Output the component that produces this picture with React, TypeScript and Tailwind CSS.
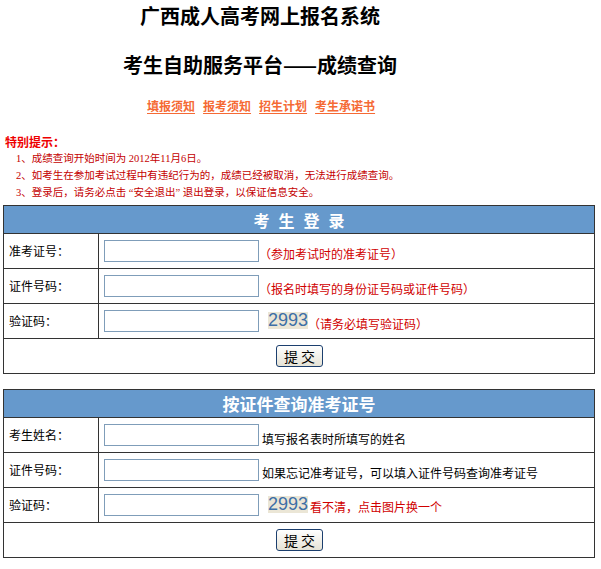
import React, { useState } from 'react';

const cn = "font-['Noto_Sans_CJK_SC',sans-serif]";

const Captcha: React.FC = () => (
  <span className="inline-flex h-[17px] w-[40px] items-center justify-center bg-[#ebe6d6] font-['Liberation_Sans',sans-serif] text-[18px] leading-[17px] text-[#3d6fa6]">
    2993
  </span>
);

const SubmitButton: React.FC = () => (
  <button className={`h-[22px] w-[47px] rounded-[3px] border border-[#1c3f6e] bg-gradient-to-b from-white to-[#e6e3d6] text-[14px] leading-[20px] text-black ${cn}`}>
    提 交
  </button>
);

interface RowProps {
  label: string;
  children?: React.ReactNode;
}

const FormRow: React.FC<RowProps> = ({ label, children }) => (
  <div className="flex h-[35px] border-t border-[#333]">
    <div className="flex w-[95px] items-center border-r border-[#333] pl-[5px] text-[12px] text-black">{label}</div>
    <div className="flex flex-1 items-center pl-[5px]">{children}</div>
  </div>
);

const Field: React.FC<{ value: string; onChange: (v: string) => void }> = ({ value, onChange }) => (
  <input
    value={value}
    onChange={e => onChange(e.target.value)}
    className="h-[22px] w-[155px] border border-[#7f9db9] bg-white px-1 text-[12px] outline-none"
  />
);

export default function App() {
  const [examNo, setExamNo] = useState('');
  const [idNo, setIdNo] = useState('');
  const [code1, setCode1] = useState('');
  const [name, setName] = useState('');
  const [idNo2, setIdNo2] = useState('');
  const [code2, setCode2] = useState('');

  return (
    <div className={`min-h-[569px] w-[601px] bg-white pt-[5px] pb-[10px] ${cn}`}>
      <div className="w-[520px] text-center">
        <h1 className="text-[20px] font-bold leading-[22px] text-black">广西成人高考网上报名系统</h1>
        <h2 className="mt-[27px] text-[20px] font-bold leading-[22px] text-black">考生自助服务平台——成绩查询</h2>
      </div>
      <div className="mt-[23px] ml-[147px] flex gap-[8px] text-[12px] font-bold leading-[14px] text-[#f56a35]">
        <a href="#" className="underline underline-offset-2">填报须知</a>
        <a href="#" className="underline underline-offset-2">报考须知</a>
        <a href="#" className="underline underline-offset-2">招生计划</a>
        <a href="#" className="underline underline-offset-2">考生承诺书</a>
      </div>

      <div className="mt-[21px] pl-[5px]">
        <div className="text-[12px] font-bold leading-[16px] text-[#ee0000]">特别提示：</div>
        <ul className="pl-[11px] font-['Liberation_Serif','Noto_Sans_CJK_SC',serif] text-[10.5px] leading-[17px] text-[#c40000]">
          <li>1、成绩查询开始时间为 2012年11月6日。</li>
          <li>2、如考生在参加考试过程中有违纪行为的，成绩已经被取消，无法进行成绩查询。</li>
          <li>3、登录后，请务必点击 “安全退出” 退出登录，以保证信息安全。</li>
        </ul>
      </div>

      <div className="mt-[4px] ml-[3px] w-[592px] border border-[#333]">
        <div className="flex h-[27px] items-center justify-center bg-[#6699cc] pl-[9px] text-[16px] font-bold tracking-[9px] text-white">
          考生登录
        </div>
        <FormRow label="准考证号：">
          <Field value={examNo} onChange={setExamNo} />
          <span className="mt-[6px] text-[12px] text-[#d00000]">（参加考试时的准考证号）</span>
        </FormRow>
        <FormRow label="证件号码：">
          <Field value={idNo} onChange={setIdNo} />
          <span className="mt-[6px] text-[12px] text-[#d00000]">（报名时填写的身份证号码或证件号码）</span>
        </FormRow>
        <FormRow label="验证码：">
          <Field value={code1} onChange={setCode1} />
          <span className="ml-[9px] mb-[5px]"><Captcha /></span>
          <span className="mt-[6px] text-[12px] text-[#d00000]">（请务必填写验证码）</span>
        </FormRow>
        <div className="flex h-[35px] items-center justify-center border-t border-[#333] pl-[1px]">
          <SubmitButton />
        </div>
      </div>

      <div className="mt-[15px] ml-[3px] w-[592px] border border-[#333]">
        <div className="flex h-[27px] items-center justify-center bg-[#6699cc] text-[17px] font-bold text-white">
          按证件查询准考证号
        </div>
        <FormRow label="考生姓名：">
          <Field value={name} onChange={setName} />
          <span className="ml-[3px] mt-[8px] text-[12px] text-black">填写报名表时所填写的姓名</span>
        </FormRow>
        <FormRow label="证件号码：">
          <Field value={idNo2} onChange={setIdNo2} />
          <span className="ml-[3px] mt-[6px] text-[12px] text-black">如果忘记准考证号，可以填入证件号码查询准考证号</span>
        </FormRow>
        <FormRow label="验证码：">
          <Field value={code2} onChange={setCode2} />
          <span className="ml-[9px] mb-[4px]"><Captcha /></span>
          <span className="ml-[2px] mt-[4px] text-[12px] text-[#d00000]">看不清，点击图片换一个</span>
        </FormRow>
        <div className="flex h-[35px] items-center justify-center border-t border-[#333] pl-[1px]">
          <SubmitButton />
        </div>
      </div>
    </div>
  );
}
